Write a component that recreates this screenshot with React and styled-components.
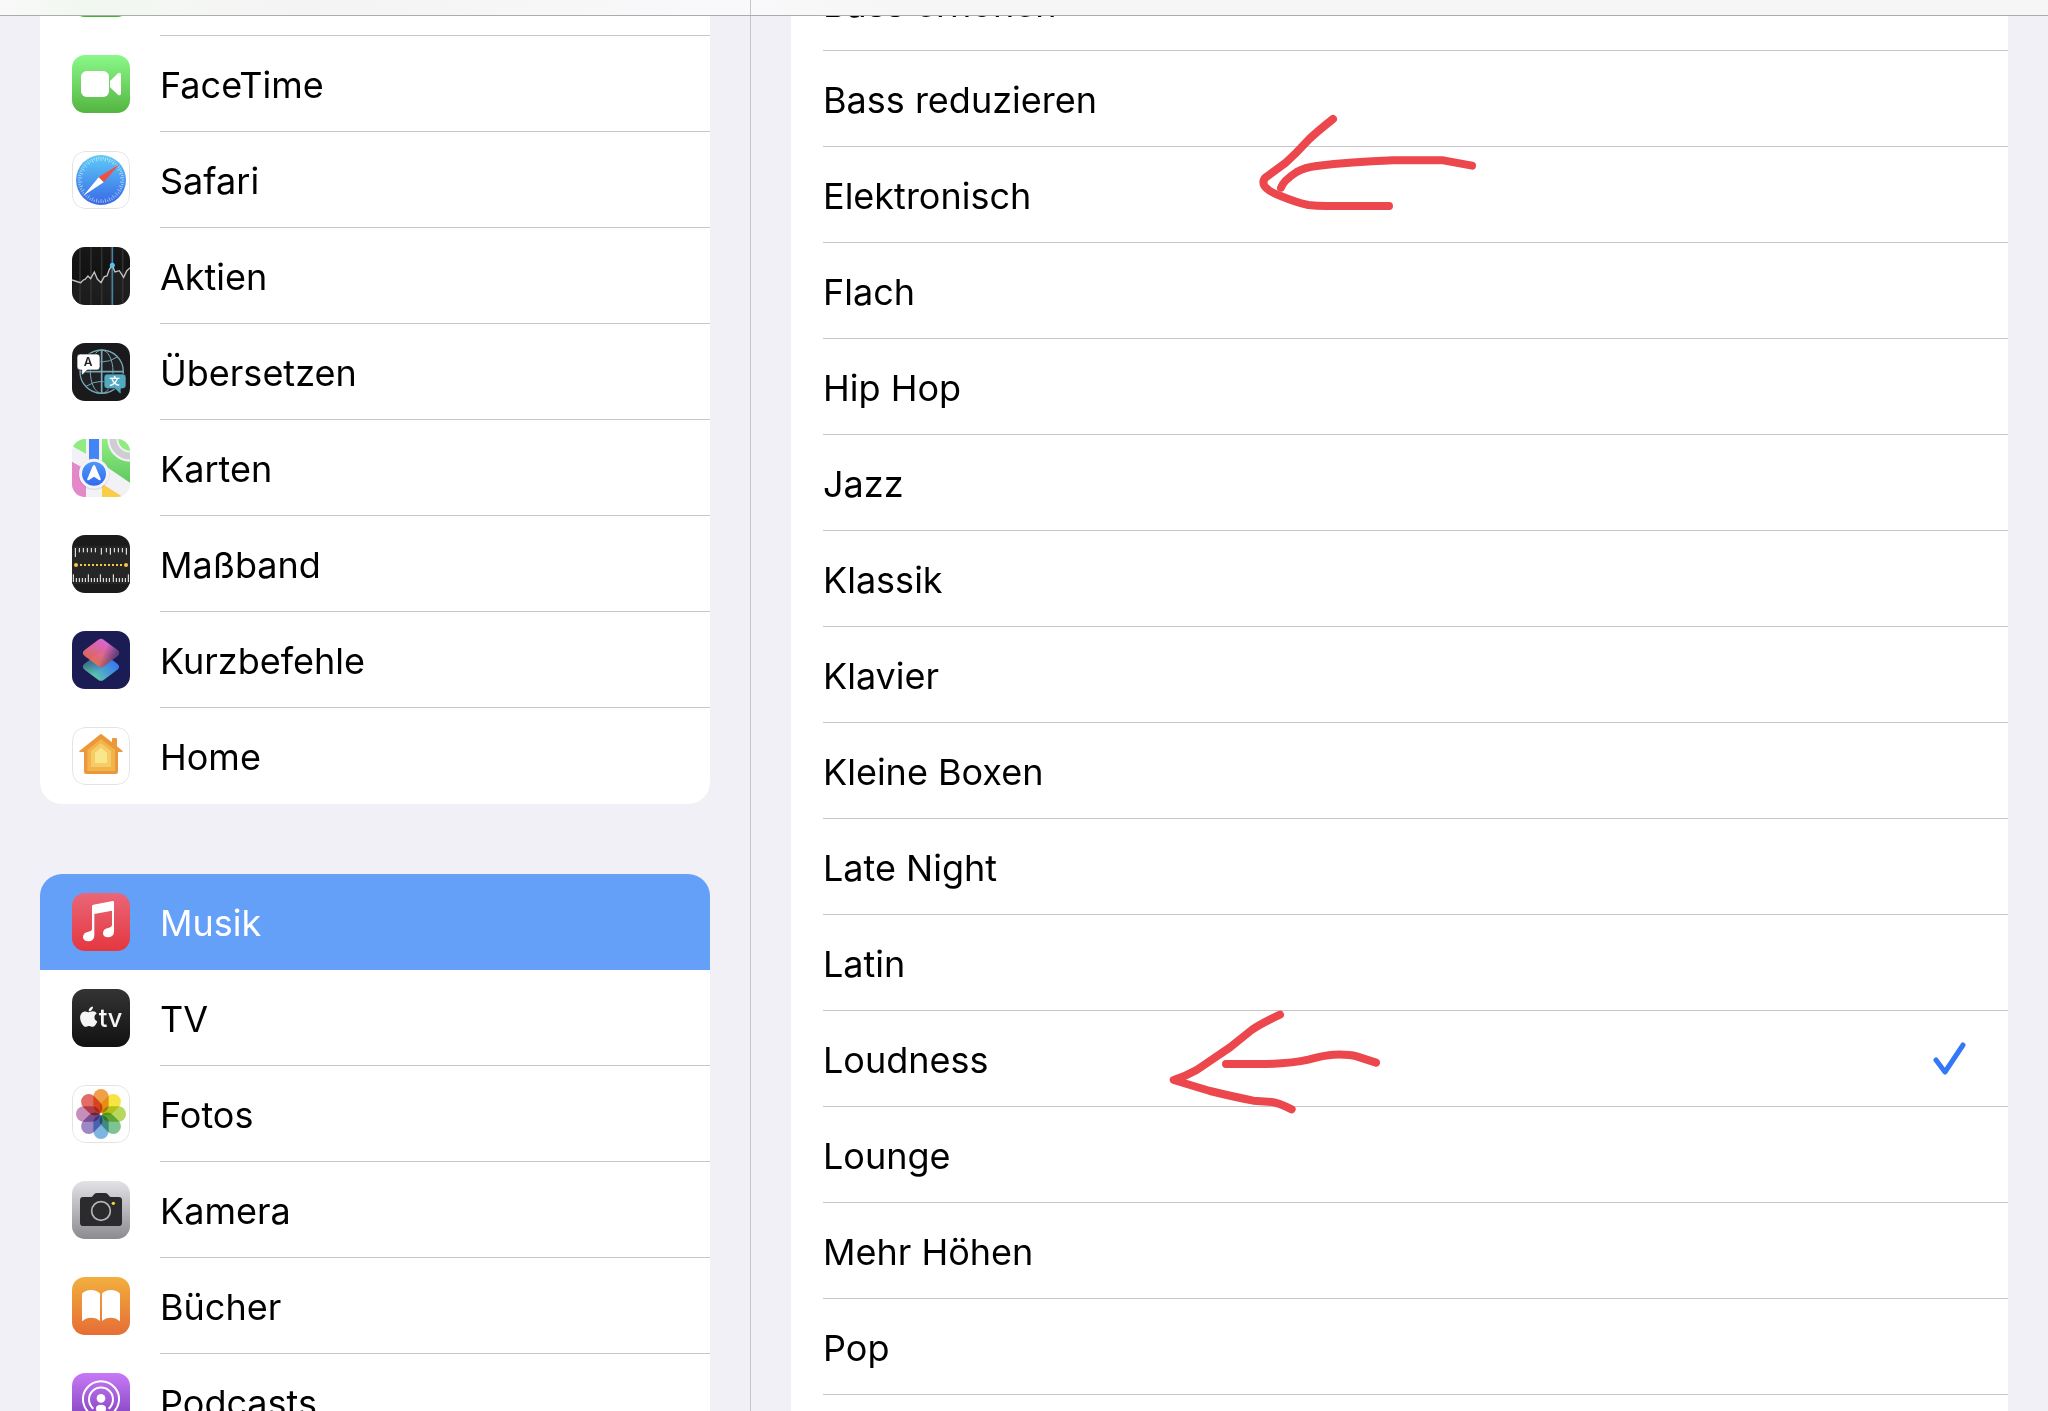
import React, { useState } from "react";
import styled, { createGlobalStyle } from "styled-components";
import { FaApple } from "react-icons/fa";

const color = {
  canvas: "#f1f0f6",
  card: "#ffffff",
  line: "#c6c6c8",
  accent: "#3478f6",
  selected: "#649ff8",
  ink: "#eb474c",
};

const GlobalStyle = createGlobalStyle`
  * { box-sizing: border-box; }
  body {
    margin: 0;
    background: ${color.canvas};
    color: #000;
    font-family: Inter, "Liberation Sans", sans-serif;
    font-size: 36px;
    line-height: 44px;
  }
`;

const Page = styled.div`
  position: relative;
  display: flex;
  flex-direction: column;
  height: 100vh;
  overflow: hidden;
`;

const Columns = styled.div`
  display: grid;
  grid-template-columns: 751px 1fr;
  flex: 1;
  min-height: 0;
`;

const TopBar = styled.header`
  display: grid;
  grid-template-columns: 751px 1fr;
  height: 16px;
  flex: none;
  border-bottom: 1px solid #acacac;
  background: linear-gradient(90deg, #f9f9f9 0, #f1f8f0 90px, #f5f7f4 180px, #f4f4f4 300px, #f9f9fb 740px, #f6f6f6 900px);
`;

const TopBarSide = styled.div`
  border-right: 1px solid ${color.line};
`;

const Sidebar = styled.nav`
  overflow: hidden;
  padding: 0 40px;
  border-right: 1px solid ${color.line};
`;

const Detail = styled.main`
  overflow: hidden;
  padding: 0 40px;
`;

const Scrolled = styled.div`
  display: flex;
  flex-direction: column;
  gap: 70px;
  margin-top: -${(p) => p.$by}px;
`;

const Card = styled.ul`
  margin: 0;
  padding: 0;
  list-style: none;
  overflow: hidden;
  border-radius: 22px;
  background: ${color.card};
`;

const Label = styled.span`
  display: flex;
  align-items: center;
  justify-content: space-between;
  flex: 1;
  height: 96px;
  padding-top: 2px;
  border-bottom: 1px solid ${color.line};
  white-space: nowrap;
`;

const AppLink = styled.a`
  display: flex;
  align-items: center;
  gap: 30px;
  padding-left: 32px;
  color: ${(p) => (p.$active ? "#fff" : "#000")};
  background: ${(p) => (p.$active ? color.selected : "transparent")};
  text-decoration: none;

  ${Label} {
    border-color: ${(p) => (p.$active ? "transparent" : color.line)};
  }
  li:last-child > & ${Label} {
    border-color: transparent;
  }
`;

const IconSvg = styled.svg`
  display: block;
  flex: none;
  width: 58px;
  height: 58px;
  border-radius: 13px;
`;

const Option = styled.label`
  display: flex;
  padding-left: 32px;
  cursor: pointer;
`;

const Radio = styled.input`
  appearance: none;
  width: 0;
  height: 0;
  margin: 0;
`;

const Check = styled.svg`
  width: 35px;
  height: 35px;
  margin-right: 40px;
`;

const Ink = styled.svg`
  position: absolute;
  left: 1150px;
  top: ${(p) => p.$top}px;
  width: 350px;
  height: 140px;
  fill: none;
  stroke: ${color.ink};
  stroke-width: 24;
  stroke-linecap: round;
  stroke-linejoin: round;
  pointer-events: none;
`;

function Tile({ id, from, to, framed, children }) {
  return (
    <IconSvg viewBox="0 0 174 174" aria-hidden="true">
      <defs>
        <linearGradient id={id} x1="0" y1="0" x2="0" y2="1">
          <stop offset="0" stopColor={from} />
          <stop offset="1" stopColor={to} />
        </linearGradient>
      </defs>
      <rect width="174" height="174" fill={`url(#${id})`} />
      {children}
      {framed && <rect x="1.5" y="1.5" width="171" height="171" rx="38" fill="none" stroke="#e3e3e4" strokeWidth="3" />}
    </IconSvg>
  );
}

const MessagesIcon = () => <Tile id="messages" from="#7df07a" to="#3fb52f" />;

const FaceTimeIcon = () => (
  <Tile id="facetime" from="#8af888" to="#54b541">
    <rect x="27" y="48" width="84" height="78" rx="17" fill="#fff" />
    <path d="M114 78 L138 55 Q147 49 147 60 V114 Q147 125 138 119 L114 97 Z" fill="#fff" />
  </Tile>
);

const SafariIcon = () => (
  <Tile id="safari" from="#fff" to="#fff" framed>
    <defs>
      <linearGradient id="safari-dial" x1="0" y1="0" x2="0" y2="1">
        <stop offset="0" stopColor="#5fcbf7" />
        <stop offset="1" stopColor="#3767e6" />
      </linearGradient>
    </defs>
    <circle cx="87" cy="87" r="75" fill="url(#safari-dial)" />
    <g stroke="#fff" strokeWidth="2" opacity="0.75">
      {Array.from({ length: 60 }, (_, i) => (
        <line key={i} x1="87" x2="87" y1="18" y2={i % 2 ? 25 : 30} transform={`rotate(${i * 6} 87 87)`} />
      ))}
    </g>
    <path d="M142 40 L80 79 L95 94 Z" fill="#f14f3f" />
    <path d="M34 134 L80 79 L95 94 Z" fill="#fff" />
  </Tile>
);

const StocksIcon = () => (
  <Tile id="stocks" from="#171717" to="#0d0d0d">
    <path d="M2 99 L19 105 L26 107 L34 99 L39 97 L48 87 L56 95 L67 75 L76 96 L87 107 L97 89 L105 87 L112 67 L121 55 L129 75 L142 71 L155 91 L164 72 L174 62 V174 H0Z" fill="#fff" opacity="0.06" />
    <path d="M24 0V174 M57 0V174 M89 0V174 M152 0V174" stroke="#303030" strokeWidth="5" />
    <path d="M116 0V174" stroke="#4a2320" strokeWidth="2" />
    <path d="M121 0V174" stroke="#3d87a9" strokeWidth="5" />
    <path d="M0 99 L19 105 L26 107 L34 99 L39 97 L48 87 L56 95 L67 75 L76 96 L87 107 L97 89 L105 87 L112 67 L121 55 L129 75 L142 71 L155 91 L164 72 L174 62" fill="none" stroke="#c4c4c4" strokeWidth="4" />
    <circle cx="121" cy="55" r="7.5" fill="#54c2f3" />
  </Tile>
);

const TranslateIcon = () => (
  <Tile id="translate" from="#1a1a1c" to="#1a1a1c">
    <g fill="none" stroke="#78a8b5" strokeWidth="4">
      <circle cx="89" cy="86" r="65" fill="#202124" />
      <ellipse cx="89" cy="86" rx="34" ry="65" strokeWidth="3" />
      <path d="M89 21V151 M24 86H154" strokeWidth="5" />
      <path d="M42 42 Q89 72 136 42 M42 130 Q89 100 136 130" strokeWidth="3" />
    </g>
    <path d="M25 33H74Q84 33 84 43V71Q84 81 74 81H46L31 96Q29 97 29 94V81H25Q15 81 15 71V43Q15 33 25 33Z" fill="#fff" stroke="#1a1a1c" strokeWidth="2" />
    <text x="48" y="70" textAnchor="middle" fontSize="36" fontWeight="600" fontFamily="Inter, sans-serif" fill="#222">A</text>
    <path d="M106 93H152Q162 93 162 103V127Q162 137 152 137H147V150Q147 154 143 151L129 137H106Q96 137 96 127V103Q96 93 106 93Z" fill="#53a9c2" stroke="#1a1a1c" strokeWidth="2" />
    <text x="128" y="127" textAnchor="middle" fontSize="32" fontWeight="700" fontFamily="'Noto Sans CJK SC', sans-serif" fill="#fff">文</text>
  </Tile>
);

const MapsIcon = () => (
  <Tile id="maps" from="#f1f1f6" to="#f1f1f6">
    <defs>
      <linearGradient id="maps-green" x1="0" y1="0" x2="0" y2="1">
        <stop offset="0" stopColor="#90ec81" />
        <stop offset="1" stopColor="#60c962" />
      </linearGradient>
      <linearGradient id="maps-blue" x1="0" y1="0" x2="0" y2="1">
        <stop offset="0" stopColor="#4f97f8" />
        <stop offset="1" stopColor="#2f6cf0" />
      </linearGradient>
    </defs>
    <path d="M0 0H42V44L0 21Z" fill="#90ec81" />
    <path d="M0 68L42 92V174H0Z" fill="#e488c9" />
    <path d="M90 0H174V131L90 74Z" fill="url(#maps-green)" />
    <path d="M90 134L153 174H90Z" fill="#f8ce47" />
    <circle cx="174" cy="0" r="68" fill="#f1f1f6" />
    <circle cx="174" cy="0" r="51" fill="none" stroke="#ceced2" strokeWidth="21" />
    <circle cx="174" cy="0" r="35" fill="#90ec81" />
    <rect x="51" width="30" height="64" fill="#4385f5" />
    <circle cx="66" cy="106" r="47" fill="#000" opacity="0.08" />
    <circle cx="66" cy="104" r="45" fill="#f4f4f8" />
    <circle cx="66" cy="104" r="36" fill="url(#maps-blue)" />
    <path d="M62 82Q66 74 70 82L86 119Q88 126 81 123L66 113L51 123Q44 126 46 119Z" fill="#fff" />
  </Tile>
);

const shortTop = [22, 34, 46, 58, 70, 103, 127, 139, 151];
const longTop = [10, 88, 115, 163];
const longBottom = [4, 49, 85, 124, 169];
const shortBottom = [13, 22, 31, 40, 58, 67, 76, 94, 103, 112, 133, 142, 151, 160];

const MeasureIcon = () => (
  <Tile id="measure" from="#1b1b1c" to="#1b1b1c">
    <rect y="33" width="174" height="114" fill="#262626" />
    <g stroke="#fff" strokeWidth="3">
      {shortTop.map((x) => <line key={x} x1={x} x2={x} y1="39" y2="52" />)}
      {longTop.map((x) => <line key={x} x1={x} x2={x} y1="39" y2={x === 10 ? 66 : 59} />)}
      {longBottom.map((x) => <line key={x} x1={x} x2={x} y1="118" y2="141" />)}
      {shortBottom.map((x) => <line key={x} x1={x} x2={x} y1="129" y2="141" />)}
    </g>
    <path d="M24 90H151" stroke="#f7ca45" strokeWidth="6" strokeDasharray="6 6" />
    <circle cx="12" cy="90" r="6" fill="#f7ca45" />
    <circle cx="162" cy="90" r="6" fill="#f7ca45" />
  </Tile>
);

const diamond = (cy) =>
  `M78 ${cy - 39}Q87 ${cy - 46} 96 ${cy - 39}L136 ${cy - 9}Q147 ${cy} 136 ${cy + 9}L96 ${cy + 39}Q87 ${cy + 46} 78 ${cy + 39}L38 ${cy + 9}Q27 ${cy} 38 ${cy - 9}Z`;

const ShortcutsIcon = () => (
  <Tile id="shortcuts" from="#1c1c55" to="#1c1c55">
    <defs>
      <linearGradient id="shortcuts-low" x1="0.15" y1="0.85" x2="0.9" y2="0.3">
        <stop offset="0" stopColor="#62d49a" />
        <stop offset="0.5" stopColor="#4b9fd0" />
        <stop offset="1" stopColor="#3577f2" />
      </linearGradient>
      <linearGradient id="shortcuts-fade" x1="0" y1="0.2" x2="0.4" y2="0.7">
        <stop offset="0" stopColor="#1c1c55" stopOpacity="0.65" />
        <stop offset="1" stopColor="#1c1c55" stopOpacity="0" />
      </linearGradient>
      <linearGradient id="shortcuts-high" x1="0.25" y1="0.7" x2="0.6" y2="0.1">
        <stop offset="0" stopColor="#ee6c5c" />
        <stop offset="1" stopColor="#e96bd8" />
      </linearGradient>
      <linearGradient id="shortcuts-shade" x1="0.6" y1="0.4" x2="1" y2="0.55">
        <stop offset="0" stopColor="#35306b" stopOpacity="0" />
        <stop offset="1" stopColor="#35306b" stopOpacity="0.85" />
      </linearGradient>
    </defs>
    <path d={diamond(107)} fill="url(#shortcuts-low)" />
    <path d={diamond(107)} fill="url(#shortcuts-fade)" />
    <path d={diamond(66)} fill="url(#shortcuts-high)" opacity="0.92" />
    <path d={diamond(66)} fill="url(#shortcuts-shade)" />
  </Tile>
);

const HomeIcon = () => (
  <Tile id="home" from="#fff" to="#fff" framed>
    <path d="M83 23Q87 19 91 23L120 46V36Q120 33 123 33H132Q135 33 135 36V58L151 71Q154 75 150 75H138V134Q138 141 131 141H43Q36 141 36 134V75H24Q19 75 23 71Z" fill="#ec973a" />
    <path d="M87 36L129 69V132H46V69Z" fill="#f3b34b" />
    <path d="M87 48L117 72V120H57V72Z" fill="#f6cc66" />
    <path d="M87 62L105 77V108H69V77Z" fill="#fae78c" />
  </Tile>
);

const MusicIcon = () => (
  <Tile id="music" from="#ea6678" to="#e4373f">
    <path d="M60 40Q60 36 64 35L122 24Q126 23 126 28V115Q126 132 109 133Q93 133 93 120Q93 107 111 104Q120 102 120 96V53L67 63V128Q66 144 49 145Q33 144 33 132Q33 119 49 116Q60 114 60 108Z" fill="#fff" />
  </Tile>
);

const TvIcon = () => (
  <Tile id="tv" from="#343434" to="#111">
    <FaApple x="15" y="48" size={70} color="#f6f6f6" />
    <text x="80" y="114" fontSize="76" fontWeight="500" fontFamily="Inter, sans-serif" fill="#f6f6f6">tv</text>
  </Tile>
);

const petals = ["#f0a049", "#f6e445", "#b8d85c", "#80c393", "#7cb4e2", "#9c88c4", "#c88ebb", "#e46c66"];

const Petal = styled.rect`
  mix-blend-mode: multiply;
`;

const PhotosIcon = () => (
  <Tile id="photos" from="#fff" to="#fff" framed>
    {petals.map((fill, i) => (
      <Petal key={fill} x="64" y="12" width="46" height="72" rx="23" fill={fill} transform={`rotate(${i * 45} 87 87)`} />
    ))}
  </Tile>
);

const CameraIcon = () => (
  <Tile id="camera" from="#e3e2e7" to="#8c8b90">
    <path d="M34 48H58Q61 48 64 43Q68 36 75 36H99Q106 36 110 43Q113 48 116 48H140Q150 48 150 58V125Q150 135 140 135H34Q24 135 24 125V58Q24 48 34 48Z" fill="#2b2b2d" />
    <circle cx="87" cy="90" r="28" fill="#2b2b2d" stroke="#b7b7b9" strokeWidth="5" />
    <circle cx="124" cy="67" r="5" fill="#f8d53f" />
  </Tile>
);

const BooksIcon = () => (
  <Tile id="books" from="#f2af3e" to="#e66d35">
    <path d="M30 50Q40 39 57 39Q74 39 84 50V132Q74 122 57 122Q42 122 33 131Q30 133 30 129Z" fill="#fff" />
    <path d="M144 50Q134 39 117 39Q100 39 90 50V132Q100 122 117 122Q132 122 141 131Q144 133 144 129Z" fill="#fff" />
  </Tile>
);

const PodcastsIcon = () => (
  <Tile id="podcasts" from="#c879f5" to="#7136b4">
    <g fill="none" stroke="#fff" strokeWidth="6">
      <path d="M61 126A54 54 0 1 1 113 126" />
      <path d="M64 107A36 36 0 1 1 110 107" />
    </g>
    <circle cx="87" cy="76" r="13" fill="#fff" />
    <path d="M72 106Q72 95 87 95Q102 95 102 106L97 138Q95 146 87 146Q79 146 77 138Z" fill="#fff" />
  </Tile>
);

const groups = [
  [
    ["Nachrichten", MessagesIcon],
    ["FaceTime", FaceTimeIcon],
    ["Safari", SafariIcon],
    ["Aktien", StocksIcon],
    ["Übersetzen", TranslateIcon],
    ["Karten", MapsIcon],
    ["Maßband", MeasureIcon],
    ["Kurzbefehle", ShortcutsIcon],
    ["Home", HomeIcon],
  ],
  [
    ["Musik", MusicIcon],
    ["TV", TvIcon],
    ["Fotos", PhotosIcon],
    ["Kamera", CameraIcon],
    ["Bücher", BooksIcon],
    ["Podcasts", PodcastsIcon],
  ],
];

const presets = [
  "Bass erhöhen", "Bass reduzieren", "Elektronisch", "Flach", "Hip Hop", "Jazz", "Klassik", "Klavier",
  "Kleine Boxen", "Late Night", "Latin", "Loudness", "Lounge", "Mehr Höhen", "Pop", "R&B",
];

export default function App() {
  const [preset, setPreset] = useState("Loudness");
  return (
    <Page>
      <GlobalStyle />
      <TopBar>
        <TopBarSide />
      </TopBar>
      <Columns>
        <Sidebar>
          <Scrolled $by={76}>
            {groups.map((apps) => (
              <Card key={apps[0][0]}>
                {apps.map(([name, Icon]) => (
                  <li key={name}>
                    <AppLink href={`#${name}`} $active={name === "Musik"}>
                      <Icon />
                      <Label>{name}</Label>
                    </AppLink>
                  </li>
                ))}
              </Card>
            ))}
          </Scrolled>
        </Sidebar>
        <Detail>
          <Scrolled $by={61}>
            <Card>
              {presets.map((name) => (
                <li key={name}>
                  <Option>
                    <Radio type="radio" name="equalizer" checked={preset === name} onChange={() => setPreset(name)} />
                    <Label>
                      {name}
                      {preset === name && (
                        <Check viewBox="0 0 35 35" aria-hidden="true">
                          <path d="M3 18L12 30L30 3" fill="none" stroke={color.accent} strokeWidth="5" strokeLinecap="round" strokeLinejoin="round" />
                        </Check>
                      )}
                    </Label>
                  </Option>
                </li>
              ))}
            </Card>
          </Scrolled>
        </Detail>
      </Columns>
      <Ink $top={90} viewBox="0 0 1050 420" aria-hidden="true">
        <path d="M549 87Q500 126 478 147L440 187L405 220L350 260Q338 268 341 283Q346 300 392 318Q440 338 475 345Q500 348 530 348H717" />
        <path d="M393 293Q400 272 440 246Q465 232 500 228Q600 216 730 211H880L966 227" />
      </Ink>
      <Ink $top={990} viewBox="0 0 1050 420" aria-hidden="true">
        <path d="M390 74Q330 102 305 120L240 172L140 240Q110 257 71 270Q130 288 180 303Q250 320 310 332L365 336Q385 338 425 358" />
        <path d="M228 222H350Q430 220 475 209Q525 195 550 194Q595 192 620 199L678 218" />
      </Ink>
    </Page>
  );
}
